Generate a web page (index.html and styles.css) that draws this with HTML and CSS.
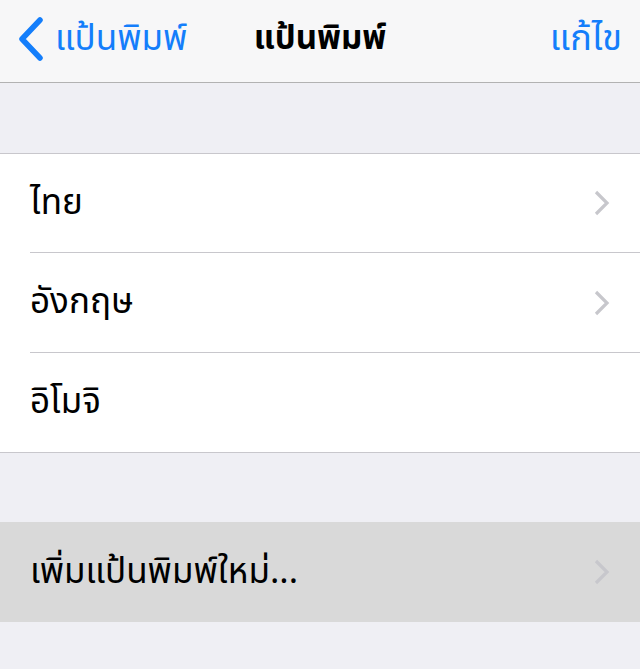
FILE: index.html
```html
<!DOCTYPE html>
<html lang="th">
<head>
<meta charset="utf-8">
<link rel="stylesheet" href="styles.css">
</head>
<body>
<div class="screen">
  <header class="navbar">
    <a class="back">
      <svg class="back-icon" width="28" height="44" viewBox="0 0 28 44"><path d="M23 3 L5 22 L23 41" fill="none" stroke="#147efb" stroke-width="5.5" stroke-linecap="round" stroke-linejoin="round"/></svg>
      <span class="back-label">แป้นพิมพ์</span>
    </a>
    <h1 class="title">แป้นพิมพ์</h1>
    <a class="edit">แก้ไข</a>
  </header>
  <div class="spacer top"></div>
  <ul class="group">
    <li class="row"><span class="label">ไทย</span><svg class="chev" width="16" height="26" viewBox="0 0 16 26"><path d="M2 2 L13 13 L2 24" fill="none" stroke="#c7c7cc" stroke-width="3.2"/></svg></li>
    <li class="row"><span class="label">อังกฤษ</span><svg class="chev" width="16" height="26" viewBox="0 0 16 26"><path d="M2 2 L13 13 L2 24" fill="none" stroke="#c7c7cc" stroke-width="3.2"/></svg></li>
    <li class="row"><span class="label">อิโมจิ</span></li>
  </ul>
  <div class="spacer mid"></div>
  <ul class="group add">
    <li class="row selected"><span class="label">เพิ่มแป้นพิมพ์ใหม่...</span><svg class="chev" width="16" height="26" viewBox="0 0 16 26"><path d="M2 2 L13 13 L2 24" fill="none" stroke="#c7c7cc" stroke-width="3.2"/></svg></li>
  </ul>
</div>
</body>
</html>
```
FILE: styles.css
```css
* { box-sizing: border-box; }
html, body { margin: 0; padding: 0; }
body {
  width: 640px;
  height: 669px;
  overflow: hidden;
  background: #efeff4;
  font-family: "Noto Sans Thai", "Noto Sans", "DejaVu Sans", sans-serif;
}
.screen { display: flex; flex-direction: column; }
.navbar {
  height: 83px;
  background: #f7f7f8;
  border-bottom: 1px solid #b2b2b2;
  display: flex;
  align-items: center;
  justify-content: space-between;
  padding: 0 18px 4px 17px;
  position: relative;
}
.back { display: flex; align-items: center; gap: 10px; color: #147efb; }
.back-icon { display: block; }
.back-label { font-size: 35px; }
.title {
  position: absolute;
  left: 0; right: 0;
  top: 0; bottom: 4px;
  display: flex;
  align-items: center;
  justify-content: center;
  margin: 0;
  font-size: 33px;
  font-weight: bold;
  color: #000;
  pointer-events: none;
}
.edit { color: #147efb; font-size: 36px; }
.spacer.top { height: 70px; }
.spacer.mid { height: 69px; }
.group {
  list-style: none;
  margin: 0;
  padding: 0 0 0 30px;
  background: #fff;
  border-top: 1px solid #c8c7cc;
  border-bottom: 1px solid #c8c7cc;
}
.group.add { border: none; padding: 0; }
.row {
  height: 100px;
  display: flex;
  align-items: center;
  justify-content: space-between;
  padding-right: 30px;
  border-bottom: 1px solid #c8c7cc;
}
.row:first-child { height: 99px; }
.row:last-child { border-bottom: none; height: 99px; }
.label { font-size: 35px; color: #000; }
.row.selected { background: #d9d9d9; padding-left: 30px; height: 100px; }
.chev { display: block; }
```
